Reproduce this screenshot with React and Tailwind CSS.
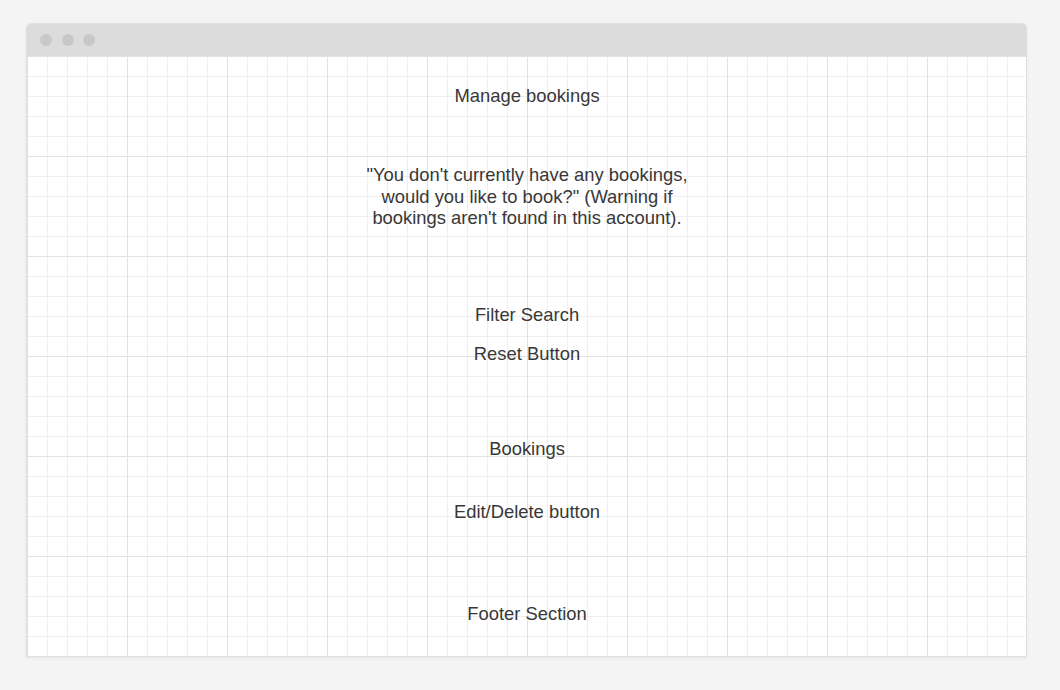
const SECTIONS = [
  { text: 'Filter Search', mt: 'mt-[75px]' },
  { text: 'Reset Button', mt: 'mt-[17px]' },
  { text: 'Bookings', mt: 'mt-[73px]' },
  { text: 'Edit/Delete button', mt: 'mt-[41px]' },
  { text: 'Footer Section', mt: 'mt-[80px]' },
];

export default function App() {
  return (
    <div className="min-h-[690px] w-[1060px] bg-[#f4f4f4] pt-[23px] pl-[26px] font-['Liberation_Sans',Arial,sans-serif] text-[18.4px] text-[#383838]">
      <div className="w-[1001px] rounded-t-[5px] border border-[#e0e0e0] bg-white shadow-[0_1px_3px_rgba(0,0,0,0.06)]">
        {/* window chrome */}
        <div className="flex h-[32px] items-center gap-[9.5px] rounded-t-[4px] bg-[#dcdcdc] pl-[13px]">
          <span className="h-[12px] w-[12px] rounded-full bg-[#c8c8c8]" />
          <span className="h-[12px] w-[12px] rounded-full bg-[#c8c8c8]" />
          <span className="h-[12px] w-[12px] rounded-full bg-[#c8c8c8]" />
        </div>

        {/* wireframe canvas */}
        <div className="flex h-[600px] flex-col items-center bg-white bg-[linear-gradient(to_right,#e2e2e2_1px,transparent_1px),linear-gradient(to_bottom,#e2e2e2_1px,transparent_1px),linear-gradient(to_right,#efefef_1px,transparent_1px),linear-gradient(to_bottom,#efefef_1px,transparent_1px)] bg-[size:100px_100px,100px_100px,20px_20px,20px_20px] pt-[29px] pl-[1px] leading-[22px]">
          <h1 className="font-normal">Manage bookings</h1>
          <p className="mt-[57px] max-w-[345px] text-center leading-[21.5px]">
            "You don't currently have any bookings, would you like to book?" (Warning if bookings aren't found in this account).
          </p>
          {SECTIONS.map(s => (
            <div key={s.text} className={s.mt}>{s.text}</div>
          ))}
        </div>
      </div>
    </div>
  );
}
